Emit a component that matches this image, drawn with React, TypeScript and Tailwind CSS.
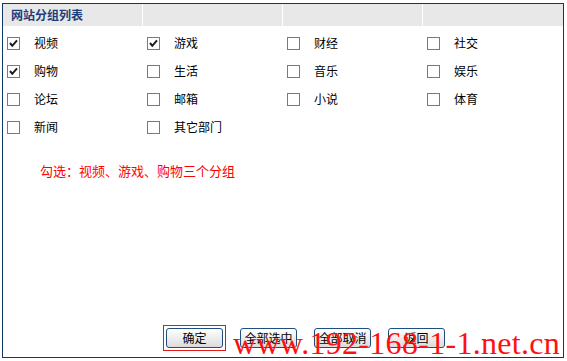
import { type FC } from "react";

interface Group {
  name: string;
  checked: boolean;
}

const groups: Group[] = [
  { name: "视频", checked: true },
  { name: "游戏", checked: true },
  { name: "财经", checked: false },
  { name: "社交", checked: false },
  { name: "购物", checked: true },
  { name: "生活", checked: false },
  { name: "音乐", checked: false },
  { name: "娱乐", checked: false },
  { name: "论坛", checked: false },
  { name: "邮箱", checked: false },
  { name: "小说", checked: false },
  { name: "体育", checked: false },
  { name: "新闻", checked: false },
  { name: "其它部门", checked: false },
];

const buttons = ["确定", "全部选中", "全部取消", "返回"];

const CheckBox: FC<{ checked: boolean }> = ({ checked }) => (
  <span className="w-[13px] h-[13px] border border-[#7a7a7a] bg-white flex items-center justify-center shrink-0">
    {checked && (
      <svg width="11" height="11" viewBox="0 0 11 11">
        <path d="M2 5 L4.3 7.8 L9 2.4" fill="none" stroke="#1b1b1b" strokeWidth="2" />
      </svg>
    )}
  </span>
);

const Btn: FC<{ label: string }> = ({ label }) => (
  <button className="w-[57px] h-[20px] border border-[#1f4f7e] rounded-[3px] bg-gradient-to-b from-white to-[#dcdcdc] text-[12px] leading-none flex items-center justify-center">
    {label}
  </button>
);

const App: FC = () => {
  return (
    <div className="relative w-[567px] h-[361px] bg-white overflow-hidden font-['Noto_Sans_CJK_SC',sans-serif] text-black">
      <div className="ml-[2px] mt-[3px] w-[562px] h-[355px] border border-[#0f3a68] flex flex-col">
        {/* header */}
        <div className="flex gap-px h-[22px]">
          <div className="w-[139px] bg-[#e8e8e8] pl-[8px] flex items-center text-[12px] font-bold text-[#1c3d7c] leading-none">
            网站分组列表
          </div>
          <div className="w-[139px] bg-[#e8e8e8]" />
          <div className="w-[139px] bg-[#e8e8e8]" />
          <div className="flex-1 bg-[#e8e8e8]" />
        </div>

        {/* groups */}
        <div className="grid grid-cols-[140px_140px_140px_140px] pt-[3px]">
          {groups.map((g) => (
            <div key={g.name} className="h-[28px] flex items-center pl-[4px]">
              <CheckBox checked={g.checked} />
              <span className="ml-[14px] text-[12px] leading-none">{g.name}</span>
            </div>
          ))}
        </div>

        <div className="pl-[37px] mt-[23px] text-[13px] leading-none text-[#ff0000]">
          勾选：视频、游戏、购物三个分组
        </div>

        {/* actions */}
        <div className="mt-auto mb-[9px] pl-[163px] flex gap-[17px]">
          {buttons.map((b, i) =>
            i === 0 ? (
              <span key={b} className="-m-[3px] p-[2px] border border-[#e01818]">
                <Btn label={b} />
              </span>
            ) : (
              <Btn key={b} label={b} />
            )
          )}
        </div>
      </div>

      {/* watermark */}
      <div className="absolute left-[233px] top-[327px] font-['Liberation_Serif',serif] font-normal text-[32px] leading-none tracking-[0.3px] text-[#ff1010] whitespace-nowrap">
        www.192-168-1-1.net.cn
      </div>
    </div>
  );
};

export default App;
